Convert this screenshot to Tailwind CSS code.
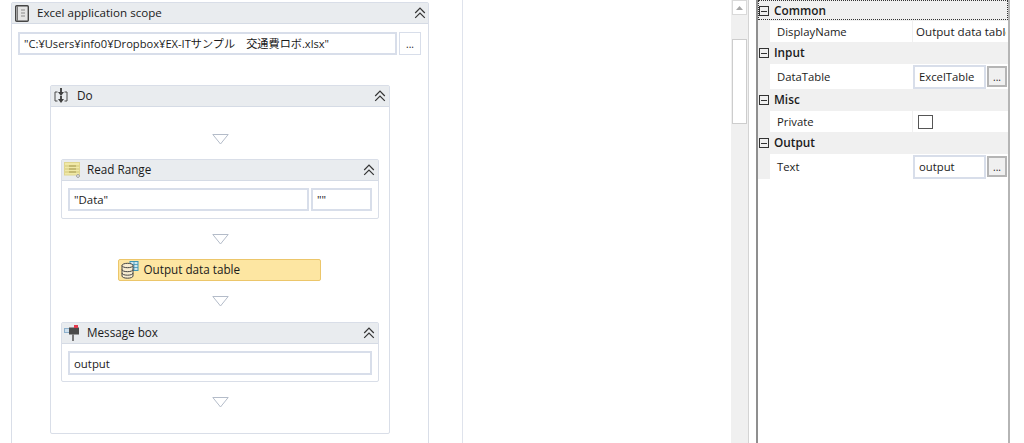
<!DOCTYPE html>
<html><head><meta charset="utf-8"><script src="https://cdn.jsdelivr.net/npm/@tailwindcss/browser@4"></script></head>
<body class="m-0 bg-white">
<div class="flex w-[1024px] h-[443px] overflow-hidden bg-white text-[11.5px] leading-none text-[#1b1b1b] font-['Open_Sans','Noto_Sans_CJK_JP',sans-serif]">
  <!-- designer -->
  <div class="w-[463px] shrink-0 h-full border-r border-[#dfe3ec] pl-[11px] pt-[2px] overflow-hidden">
    <div class="w-[418px] h-[500px] border border-[#d9dee8] rounded-[2px]">
      <div class="h-[21px] bg-[#e9ecef] border-b border-[#d5dbe5] flex items-center pl-[3px] pr-[2px]">
        <svg class="w-[14px] h-[17px] mr-[8px] shrink-0" viewBox="0 0 14 17"><rect x="0.700" y="0.700" width="12.600" height="15.600" rx="1" fill="#e4e4e4" stroke="#454545" stroke-width="1.400"/><path d="M2.500 1v15" stroke="#777"/><path d="M6 5h4M6 8h4M6 11h4" stroke="#8a8a8a"/></svg>
        <span class="flex-1 text-[11.6px]">Excel application scope</span>
        <svg class="w-[12px] h-[12px] shrink-0" viewBox="0 0 12 12" fill="none" stroke="#333" stroke-width="1.200"><path d="M1.200 6 6 1.200 10.800 6M1.200 10.800 6 6l4.800 4.800"/></svg>
      </div>
      <div class="flex gap-[2px] pl-[6px] mt-[8px]">
        <div class="w-[379px] h-[23px] border-2 border-[#d8deea] flex items-center pl-[4px] text-[11.150px] whitespace-nowrap">"C:¥Users¥info0¥Dropbox¥EX-ITサンプル　交通費ロボ.xlsx"</div>
        <div class="w-[22px] h-[23px] border border-[#d8deea] flex items-center justify-center text-[10px]">...</div>
      </div>
      <div class="ml-[38px] mt-[30px] w-[340px] h-[349px] border border-[#d9dee8] rounded-[2px] flex flex-col">
        <div class="h-[21px] shrink-0 bg-[#e9ecef] border-b border-[#d5dbe5] flex items-center pl-[3px] pr-[3px]">
          <svg class="w-[14px] h-[16px] mr-[9px] shrink-0" viewBox="0 0 14 16" fill="none" stroke="#4a4a4a"><path d="M3.500 4H1v9h2.500M10.500 4H13v9h-2.500"/><path d="M7 0v4" stroke-width="2"/><path d="M4 4h6L7 8zM4 11h6l-3 4z" fill="#3f3f3f" stroke="none"/><path d="M7 8v3" stroke-width="2"/></svg>
          <span class="flex-1 text-[11.8px]">Do</span>
          <svg class="w-[12px] h-[12px] shrink-0" viewBox="0 0 12 12" fill="none" stroke="#333" stroke-width="1.200"><path d="M1.200 6 6 1.200 10.800 6M1.200 10.800 6 6l4.800 4.800"/></svg>
        </div>
        <div class="flex flex-col items-center pt-[27px] px-[10px]">
          <svg class="w-[17px] h-[11px] shrink-0" viewBox="0 0 17 11" fill="none" stroke="#b4bcc9"><path d="M.8.500h15.400L8.500 10z"/></svg>
          <div class="w-[318px] h-[60px] mt-[14px] border border-[#d9dee8] rounded-[2px]">
            <div class="h-[21px] bg-[#e9ecef] border-b border-[#d5dbe5] flex items-center pl-[2px] pr-[3px]">
              <svg class="w-[16px] h-[16px] mr-[7px] shrink-0" viewBox="0 0 16 16"><rect x="0.500" y="0.500" width="15" height="12.500" fill="#f0e9a8" stroke="#e0d68f"/><path d="M1 4h14M1 7h14M1 10h14" stroke="#d2c779"/><path d="M5 4h7M5 7h7M5 10h7" stroke="#a89c55"/><circle cx="14" cy="14" r="1.400" fill="#fff" stroke="#9a9a9a"/></svg>
              <span class="flex-1 text-[11.700px]">Read Range</span>
              <svg class="w-[12px] h-[12px] shrink-0" viewBox="0 0 12 12" fill="none" stroke="#333" stroke-width="1.200"><path d="M1.200 6 6 1.200 10.800 6M1.200 10.800 6 6l4.800 4.800"/></svg>
            </div>
            <div class="flex gap-[2px] pl-[6px] mt-[7px]">
              <div class="w-[241px] h-[23px] border-2 border-[#d8deea] flex items-center pl-[4px] pt-[1px] text-[11.400px]">"Data"</div>
              <div class="w-[61px] h-[23px] border-2 border-[#d8deea] flex items-center pl-[4px] pt-[1px] text-[11.400px]">""</div>
            </div>
          </div>
          <svg class="w-[17px] h-[11px] mt-[15px] shrink-0" viewBox="0 0 17 11" fill="none" stroke="#b4bcc9"><path d="M.8.500h15.400L8.500 10z"/></svg>
          <div class="w-[203px] h-[22px] mt-[14px] mr-[2px] bg-[#fde6a2] border border-[#ecc66a] rounded-[2px] flex items-center pl-[2px]">
            <svg class="w-[18px] h-[18px] mr-[5px] shrink-0" viewBox="0 0 18 18" fill="none"><rect x="9" y="0.500" width="8" height="9" fill="#cfe6ee" stroke="#3f95b5"/><path d="M9 3.500h8M9 6.500h8M13 .5v9" stroke="#3f95b5" stroke-width=".8"/><path d="M1 4.500v10.500c0 1.200 2.200 2.200 5.500 2.200S12 16.200 12 15V4.500z" fill="#f7ecd0" stroke="#444"/><ellipse cx="6.500" cy="4.500" rx="5.500" ry="2.200" fill="#f7ecd0" stroke="#444"/><path d="M1 8.500c0 1.200 2.200 2.200 5.500 2.200S12 9.700 12 8.500M1 12c0 1.200 2.200 2.200 5.500 2.200S12 13.200 12 12" stroke="#444"/></svg>
            <span class="text-[11.700px]">Output data table</span>
          </div>
          <svg class="w-[17px] h-[11px] mt-[15px] shrink-0" viewBox="0 0 17 11" fill="none" stroke="#b4bcc9"><path d="M.8.500h15.400L8.500 10z"/></svg>
          <div class="w-[318px] h-[60px] mt-[15px] border border-[#d9dee8] rounded-[2px]">
            <div class="h-[21px] bg-[#e9ecef] border-b border-[#d5dbe5] flex items-center pl-[2px] pr-[3px]">
              <svg class="w-[16px] h-[16px] mr-[7px] shrink-0" viewBox="0 0 16 16" fill="none"><rect x="0.500" y="3.500" width="5" height="4" fill="#cfe0ee" stroke="#8eb1cc"/><rect x="5" y="2.500" width="10" height="7" fill="#4b4b4b"/><rect x="10" y="0" width="4" height="3" fill="#e23b4e"/><path d="M9 9.500V16" stroke="#555" stroke-width="1.500"/></svg>
              <span class="flex-1 text-[11.700px]">Message box</span>
              <svg class="w-[12px] h-[12px] shrink-0" viewBox="0 0 12 12" fill="none" stroke="#333" stroke-width="1.200"><path d="M1.200 6 6 1.200 10.800 6M1.200 10.800 6 6l4.800 4.800"/></svg>
            </div>
            <div class="pl-[6px] mt-[7px]">
              <div class="w-[304px] h-[24px] border-2 border-[#d8deea] flex items-center pl-[4px] pt-[1px] text-[11.400px]">output</div>
            </div>
          </div>
          <svg class="w-[17px] h-[11px] mt-[15px] shrink-0" viewBox="0 0 17 11" fill="none" stroke="#b4bcc9"><path d="M.8.500h15.400L8.500 10z"/></svg>
        </div>
      </div>
    </div>
  </div>
  <div class="w-[268px] shrink-0"></div>
  <!-- scrollbar -->
  <div class="w-[17px] shrink-0 h-full bg-[#f0f0f0] flex flex-col items-center">
    <div class="w-[15px] h-[15px] bg-white border border-[#d9d9d9] flex items-center justify-center">
      <svg class="w-[7px] h-[4px]" viewBox="0 0 7 4"><path d="M0 4 3.500 0 7 4z" fill="#a8a8a8"/></svg>
    </div>
    <div class="w-[15px] h-[85px] mt-[24px] bg-white border border-[#cdcdcd]"></div>
  </div>
  <div class="w-[8px] shrink-0 h-full bg-white border-l border-[#d4d4d4]"></div>
  <!-- properties -->
  <div class="w-[254px] shrink-0 h-full bg-white border-x-2 border-r-[#b5b5b5] border-l-[#8f8f8f] text-[11.300px]">
    <div class="h-[20px] bg-[#f0f0f0] border border-dotted border-[#333] flex items-center font-semibold text-[11.800px] pl-0 pt-[2px]">
      <span class="w-[10px] h-[10px] border border-[#333] mr-[5px] flex items-center justify-center"><span class="w-[6px] h-[1px] bg-[#333]"></span></span>Common
    </div>
    <div class="h-[22px] flex bg-[#f0f0f0] pt-[1px]">
      <div class="w-[12px]"></div>
      <div class="w-[142px] bg-white flex items-center pl-[7px] pt-[1px]">DisplayName</div>
      <div class="flex-1 bg-white border-l border-[#f0f0f0] flex items-center pl-[3px]"><span class="w-[90px] overflow-hidden whitespace-nowrap text-[11.600px] leading-[14px]">Output data table</span></div>
    </div>
    <div class="h-[22px] bg-[#f0f0f0] flex items-center font-semibold text-[11.800px] pl-[1px]">
      <span class="w-[10px] h-[10px] border border-[#333] mr-[5px] flex items-center justify-center"><span class="w-[6px] h-[1px] bg-[#333]"></span></span>Input
    </div>
    <div class="h-[25px] flex bg-[#f0f0f0]">
      <div class="w-[12px]"></div>
      <div class="w-[142px] bg-white flex items-center pl-[7px]">DataTable</div>
      <div class="flex-1 bg-white flex items-center pl-[1px] gap-[1px]">
        <div class="w-[73px] h-[24px] border-2 border-[#d8deea] flex items-center pl-[4px]">ExcelTable</div>
        <div class="w-[20px] h-[21px] bg-[#f0f0f0] border-2 border-[#b5b5b5] flex items-center justify-center text-[10px]">...</div>
      </div>
    </div>
    <div class="h-[22px] bg-[#f0f0f0] flex items-center font-semibold text-[11.800px] pl-[1px]">
      <span class="w-[10px] h-[10px] border border-[#333] mr-[5px] flex items-center justify-center"><span class="w-[6px] h-[1px] bg-[#333]"></span></span>Misc
    </div>
    <div class="h-[21px] flex bg-[#f0f0f0]">
      <div class="w-[12px]"></div>
      <div class="w-[142px] bg-white flex items-center pl-[7px]">Private</div>
      <div class="flex-1 bg-white border-l border-[#f0f0f0] flex items-center pl-[5px]">
        <div class="w-[15px] h-[14px] border border-[#555]"></div>
      </div>
    </div>
    <div class="h-[22px] bg-[#f0f0f0] flex items-center font-semibold text-[11.800px] pl-[1px]">
      <span class="w-[10px] h-[10px] border border-[#333] mr-[5px] flex items-center justify-center"><span class="w-[6px] h-[1px] bg-[#333]"></span></span>Output
    </div>
    <div class="h-[25px] flex bg-[#f0f0f0]">
      <div class="w-[12px]"></div>
      <div class="w-[142px] bg-white flex items-center pl-[7px]">Text</div>
      <div class="flex-1 bg-white flex items-center pl-[1px] gap-[1px]">
        <div class="w-[73px] h-[24px] border-2 border-[#d8deea] flex items-center pl-[4px]">output</div>
        <div class="w-[20px] h-[21px] bg-[#f0f0f0] border-2 border-[#b5b5b5] flex items-center justify-center text-[10px]">...</div>
      </div>
    </div>
  </div>
</div>
</body></html>
